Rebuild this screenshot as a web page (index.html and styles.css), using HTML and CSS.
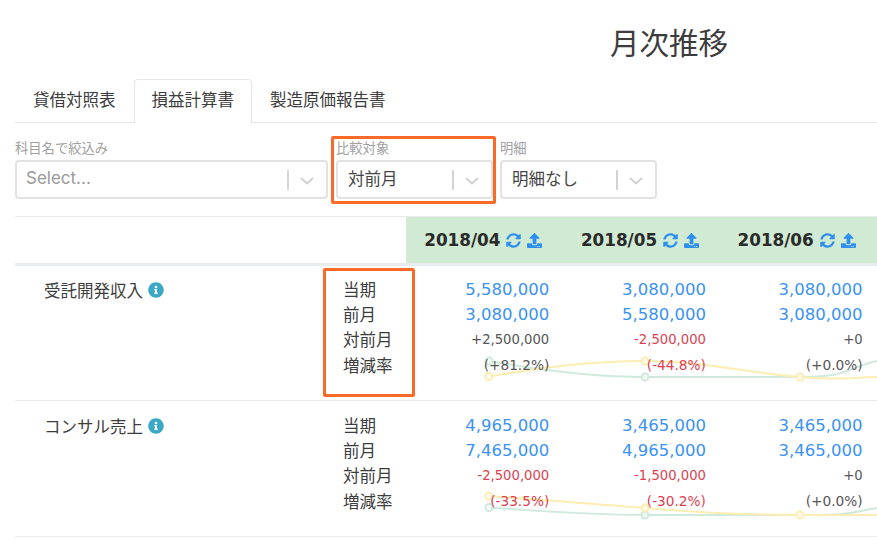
FILE: index.html
```html
<!DOCTYPE html>
<html lang="ja">

<head>
    <meta charset="utf-8">
    <meta name="viewport" content="width=device-width, initial-scale=1.0">

    <title>月次推移</title>

    <link rel="stylesheet" href="styles.css">

</head>

<body>
    <svg class="defs" width="0" height="0">
        <symbol id="sync" viewBox="0 0 512 512">
            <path d="M370.72 133.28C339.458 104.008 298.888 87.962 255.848 88c-77.458.068-144.328 53.178-162.791 126.85-1.344 5.363-6.122 9.15-11.651 9.15H24.103c-7.498 0-13.194-6.807-11.807-14.176C33.933 94.924 134.813 8 256 8c66.448 0 126.791 26.136 171.315 68.685L463.03 40.97C478.149 25.851 504 36.559 504 57.941V192c0 13.255-10.745 24-24 24H345.941c-21.382 0-32.09-25.851-16.971-40.971l41.75-41.749zM32 296h134.059c21.382 0 32.09 25.851 16.971 40.971l-41.75 41.75c31.262 29.273 71.835 45.319 114.876 45.28 77.418-.07 144.315-53.144 162.787-126.849 1.344-5.363 6.122-9.15 11.651-9.15h57.304c7.498 0 13.194 6.807 11.807 14.176C478.067 417.076 377.187 504 256 504c-66.448 0-126.791-26.136-171.315-68.685L48.97 471.03C33.851 486.149 8 475.441 8 454.059V320c0-13.255 10.745-24 24-24z"/>
        </symbol>
        <symbol id="upload" viewBox="0 0 512 512">
            <path d="M296 384h-80c-13.3 0-24-10.7-24-24V192h-87.7c-17.8 0-26.7-21.5-14.1-34.1L242.3 5.7c7.5-7.5 19.8-7.5 27.3 0l152.2 152.2c12.6 12.6 3.7 34.1-14.1 34.1H320v168c0 13.3-10.7 24-24 24zm216-8v112c0 13.3-10.7 24-24 24H24c-13.3 0-24-10.7-24-24V376c0-13.3 10.7-24 24-24h136v8c0 30.9 25.1 56 56 56h80c30.9 0 56-25.1 56-56v-8h136c13.3 0 24 10.7 24 24zm-124 88c0-11-9-20-20-20s-20 9-20 20 9 20 20 20 20-9 20-20zm64 0c0-11-9-20-20-20s-20 9-20 20 9 20 20 20 20-9 20-20z"/>
        </symbol>
        <symbol id="info" viewBox="0 0 512 512">
            <path d="M256 8C119.043 8 8 119.083 8 256c0 136.997 111.043 248 248 248s248-111.003 248-248C504 119.083 392.957 8 256 8zm0 110c23.196 0 42 18.804 42 42s-18.804 42-42 42-42-18.804-42-42 18.804-42 42-42zm56 254c0 6.627-5.373 12-12 12h-88c-6.627 0-12-5.373-12-12v-24c0-6.627 5.373-12 12-12h12v-64h-12c-6.627 0-12-5.373-12-12v-24c0-6.627 5.373-12 12-12h64c6.627 0 12 5.373 12 12v100h12c6.627 0 12 5.373 12 12v24z"/>
        </symbol>
        <symbol id="chevron" viewBox="0 0 14 8">
            <path d="M1 1l6 5.5L13 1" fill="none" stroke="currentColor" stroke-width="1.8"/>
        </symbol>
    </svg>

    <h1 class="title">月次推移</h1>

    <ul class="tabs">
        <li class="tab">貸借対照表</li>
        <li class="tab active">損益計算書</li>
        <li class="tab">製造原価報告書</li>
    </ul>

    <section class="filters">
        <div class="filter wide">
            <label>科目名で絞込み</label>
            <div class="select">
                <span class="value placeholder">Select...</span>
                <span class="sep"></span>
                <svg class="chev"><use href="#chevron"/></svg>
            </div>
        </div>
        <div class="filter">
            <label>比較対象</label>
            <div class="select">
                <span class="value">対前月</span>
                <span class="sep"></span>
                <svg class="chev"><use href="#chevron"/></svg>
            </div>
        </div>
        <div class="filter">
            <label>明細</label>
            <div class="select">
                <span class="value">明細なし</span>
                <span class="sep"></span>
                <svg class="chev"><use href="#chevron"/></svg>
            </div>
        </div>
    </section>

    <section class="report">
        <div class="head">
            <div class="blank"></div>
            <div class="month">2018/04 <svg class="ico"><use href="#sync"/></svg><svg class="ico"><use href="#upload"/></svg></div>
            <div class="month">2018/05 <svg class="ico"><use href="#sync"/></svg><svg class="ico"><use href="#upload"/></svg></div>
            <div class="month">2018/06 <svg class="ico"><use href="#sync"/></svg><svg class="ico"><use href="#upload"/></svg></div>
            <div class="rest"></div>
        </div>

        <div class="row">
            <svg class="spark" width="388" height="36">
                <path class="green" d="M0 5C50 14 100 21 156 21S260 21 311 21S360 11 388 5"/>
                <path class="yellow" d="M0 20.5C50 12 100 5 156 5S260 17 311 21S360 21 388 21"/>
                <circle class="green" cx="0" cy="5" r="3.5"/>
                <circle class="green" cx="156" cy="21" r="3.5"/>
                <circle class="yellow" cx="0" cy="20.5" r="3.5"/>
                <circle class="yellow" cx="156" cy="5" r="3.5"/>
                <circle class="yellow" cx="311" cy="21" r="3.5"/>
            </svg>
            <div class="name">受託開発収入 <svg class="info"><use href="#info"/></svg></div>
            <div class="kinds">
                <p>当期</p>
                <p>前月</p>
                <p>対前月</p>
                <p>増減率</p>
            </div>
            <div class="nums">
                <p class="amt">5,580,000</p>
                <p class="amt">3,080,000</p>
                <p class="diff">+2,500,000</p>
                <p class="rate">(+81.2%)</p>
            </div>
            <div class="nums">
                <p class="amt">3,080,000</p>
                <p class="amt">5,580,000</p>
                <p class="diff minus">-2,500,000</p>
                <p class="rate minus">(-44.8%)</p>
            </div>
            <div class="nums">
                <p class="amt">3,080,000</p>
                <p class="amt">3,080,000</p>
                <p class="diff">+0</p>
                <p class="rate">(+0.0%)</p>
            </div>
        </div>

        <div class="row">
            <svg class="spark" width="388" height="36">
                <path class="green" d="M0 15.5C50 19 100 23 156 23S260 23 311 23S360 21 388 16"/>
                <path class="yellow" d="M0 4C50 8 100 11 156 16S260 23 311 23S360 23 388 23"/>
                <circle class="green" cx="0" cy="15.5" r="3.5"/>
                <circle class="green" cx="156" cy="23" r="3.5"/>
                <circle class="yellow" cx="0" cy="4" r="3.5"/>
                <circle class="yellow" cx="156" cy="16" r="3.5"/>
                <circle class="yellow" cx="311" cy="23" r="3.5"/>
            </svg>
            <div class="name">コンサル売上 <svg class="info"><use href="#info"/></svg></div>
            <div class="kinds">
                <p>当期</p>
                <p>前月</p>
                <p>対前月</p>
                <p>増減率</p>
            </div>
            <div class="nums">
                <p class="amt">4,965,000</p>
                <p class="amt">7,465,000</p>
                <p class="diff minus">-2,500,000</p>
                <p class="rate minus">(-33.5%)</p>
            </div>
            <div class="nums">
                <p class="amt">3,465,000</p>
                <p class="amt">4,965,000</p>
                <p class="diff minus">-1,500,000</p>
                <p class="rate minus">(-30.2%)</p>
            </div>
            <div class="nums">
                <p class="amt">3,465,000</p>
                <p class="amt">3,465,000</p>
                <p class="diff">+0</p>
                <p class="rate">(+0.0%)</p>
            </div>
        </div>
    </section>

    <div class="mark mark-select"></div>
    <div class="mark mark-kinds"></div>
</body>

</html>
```

FILE: styles.css
```css
html,
body {
    margin: 0;
    height: 100%;
    overflow: hidden;
}

body {
    position: relative;
    background: #fff;
    color: #3c3c3c;
    font-family: "Noto Sans CJK JP", "Noto Sans", sans-serif;
    font-size: 16.5px;
}

p {
    margin: 0;
}

.defs {
    position: absolute;
}

.title {
    margin: 0;
    padding: 26px 0 23px 610px;
    height: 30px;
    font-size: 29.5px;
    font-weight: 400;
    line-height: 30px;
}

.tabs {
    display: flex;
    margin: 0 0 0 15px;
    padding: 0;
    height: 43px;
    list-style: none;
    border-bottom: 1px solid #e4e7ea;
}

.tab {
    padding: 0 17px 4px;
    height: 38px;
    line-height: 38px;
    border: 1px solid transparent;
    border-bottom: 0;
    white-space: nowrap;
}

.tab.active {
    height: 39px;
    background: #fff;
    border-color: #e4e7ea;
    border-radius: 4px 4px 0 0;
}

.filters {
    display: flex;
    gap: 7px;
    margin: 16px 0 0 15px;
}

.filter {
    width: 157px;
}

.filter.wide {
    width: 313px;
    margin-right: 1px;
}

.filter label {
    display: block;
    height: 21px;
    color: #a0a0a0;
    font-size: 13.3px;
    line-height: 18px;
}

.select {
    display: flex;
    align-items: center;
    box-sizing: border-box;
    height: 39px;
    padding-left: 10px;
    border: 2px solid #e2e2e2;
    border-radius: 4px;
}

.value {
    flex: 1;
    padding-bottom: 4px;
    color: #444;
}

.placeholder {
    margin-left: -1px;
    color: #999;
    font-family: Inter, sans-serif;
    font-size: 17px;
}

.sep {
    width: 1.5px;
    height: 20px;
    background: #d4d4d4;
}

.chev {
    width: 14px;
    height: 8px;
    margin: 2px 12px 0 11.5px;
    color: #cfcfcf;
}

.report {
    margin: 17px 0 0 15px;
    border-top: 1px solid #e9ecef;
}

.head {
    display: grid;
    grid-template-columns: 391px repeat(3, 156.67px) 1fr;
    height: 46px;
    border-bottom: 3px solid #e9ecef;
}

.month,
.rest {
    background: #d0ead3;
}

.month {
    display: flex;
    justify-content: center;
    align-items: center;
    padding-right: 2px;
    color: #2a2a2a;
    font-family: "DejaVu Sans", sans-serif;
    font-size: 16.8px;
    font-weight: 700;
}

.ico {
    width: 15px;
    height: 15px;
    margin-left: 6px;
    fill: #2f8fee;
}

.row {
    position: relative;
    display: grid;
    grid-template-columns: 328px 63px repeat(3, 156.67px);
    height: 135px;
    border-bottom: 1px solid #e9ecef;
    box-sizing: border-box;
}

.row + .row {
    margin-top: 1px;
}

.name {
    display: flex;
    align-items: center;
    gap: 5px;
    height: 25px;
    margin-top: 11px;
    padding-left: 29px;
}

.info {
    width: 16px;
    height: 16px;
    fill: #3ba8c6;
}

.kinds,
.nums {
    padding-top: 11px;
}

.kinds p,
.nums p {
    height: 25.2px;
    line-height: 25.2px;
    white-space: nowrap;
}

.nums {
    position: relative;
    padding-right: 13.4px;
    text-align: right;
    font-family: "DejaVu Sans", sans-serif;
}

.amt {
    color: #3a92f5;
    font-size: 16.5px;
}

.diff {
    color: #555;
    font-size: 13.2px;
}

.rate {
    color: #555;
    font-size: 13.7px;
}

.minus {
    color: #dc3f50;
}

/* sparkline sits behind the figures */
.spark {
    position: absolute;
    left: 474px;
    top: 90px;
    overflow: visible;
}

.spark path,
.spark circle {
    fill: none;
    stroke-width: 2px;
}

.spark circle {
    fill: #fff;
    fill-opacity: 0.6;
}

.spark .green {
    stroke: #cfe9dd;
}

.spark .yellow {
    stroke: #fdedb0;
}

/* orange callouts drawn on top of the screenshot */
.mark {
    position: absolute;
    box-sizing: border-box;
    border: 3px solid #f96a28;
    border-radius: 2px;
}

.mark-select {
    left: 331px;
    top: 136px;
    width: 165px;
    height: 68px;
}

.mark-kinds {
    left: 323px;
    top: 268px;
    width: 92px;
    height: 129px;
}
```
